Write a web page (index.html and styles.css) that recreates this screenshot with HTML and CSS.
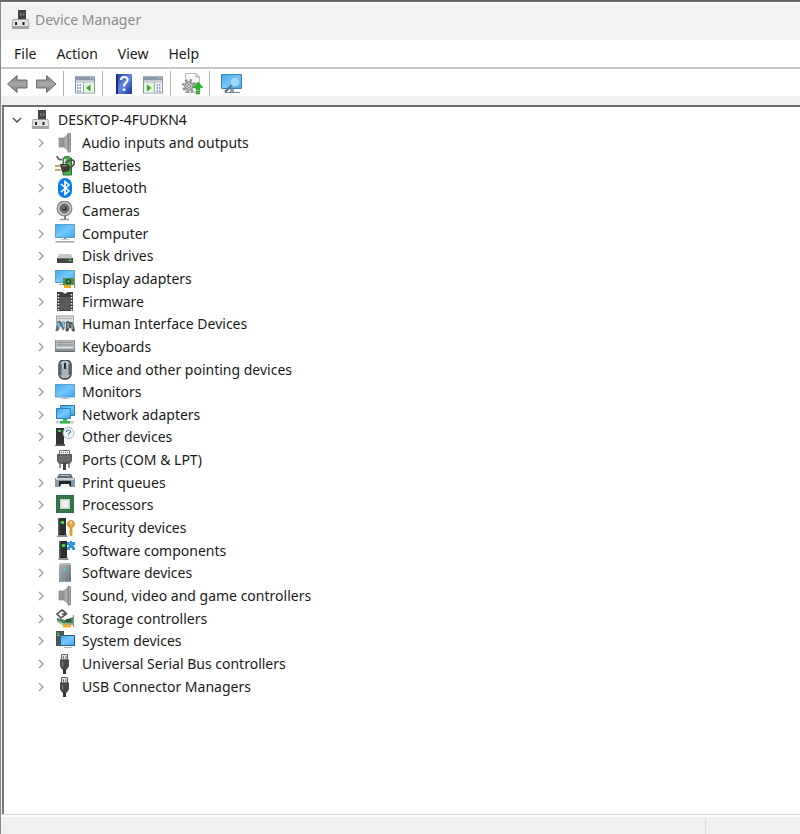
FILE: index.html
```
<!DOCTYPE html>
<html lang="en">
<head>
    <meta charset="UTF-8">
    <meta name="viewport" content="width=device-width, initial-scale=1.0">
    <title>Device Manager</title>
    <link rel="stylesheet" href="styles.css">
</head>
<body>
    <!-- shared gradients and repeated icons -->
    <svg class="defs" aria-hidden="true">
        <defs>
            <linearGradient id="blue" x1="0" y1="0" x2="1" y2="1">
                <stop offset="0" stop-color="#3ea6ec"/><stop offset=".5" stop-color="#74c8fc"/><stop offset="1" stop-color="#3ba5f3"/>
            </linearGradient>
            <linearGradient id="metal" x1="0" y1="0" x2="1" y2="0">
                <stop offset="0" stop-color="#8a8a8a"/><stop offset=".5" stop-color="#b4b4b4"/><stop offset="1" stop-color="#8c8c8c"/>
            </linearGradient>
            <linearGradient id="arrow" x1="0" y1="0" x2="0" y2="1">
                <stop offset="0" stop-color="#777"/><stop offset=".5" stop-color="#aaa"/><stop offset="1" stop-color="#777"/>
            </linearGradient>
            <linearGradient id="case" x1="0" y1="0" x2="1" y2="1">
                <stop offset="0" stop-color="#b0b8bd"/><stop offset="1" stop-color="#69747b"/>
            </linearGradient>
            <linearGradient id="help" x1="0" y1="0" x2="1" y2="1">
                <stop offset="0" stop-color="#1c3a9c"/><stop offset=".5" stop-color="#6486e0"/><stop offset="1" stop-color="#16339a"/>
            </linearGradient>
        </defs>
        <symbol id="chevron" viewBox="0 0 10 10"><path d="M3 1l4 4-4 4" fill="none" stroke="#a0a0a0" stroke-width="1.4"/></symbol>
        <symbol id="device" viewBox="0 0 20 20">
            <path d="M7 0h8v10H7z" fill="#444"/><path d="M9 3h1.500v3H9zM12 3h1.500v3H12z" fill="#777"/>
            <path d="M2 9.500h15l1 7H1z" fill="#e4e4e4" stroke="#999" stroke-width=".8"/>
            <path d="M1 16h17v3H1z" fill="#a5a5a5"/><path d="M4 12h2v3H4zM11.500 12h2v3h-2z" fill="#222"/>
        </symbol>
        <symbol id="speaker" viewBox="0 0 20 20">
            <path d="M4 5h4v9H4z" fill="#9b9b9b" stroke="#777" stroke-width=".6"/>
            <path d="M8 5l6-5v19l-6-5z" fill="url(#metal)"/><path d="M13 .500h2.500v18.500H13q1.500-9 0-18.500z" fill="#b0b0b0" stroke="#707070" stroke-width=".7"/>
        </symbol>
        <symbol id="usb" viewBox="0 0 20 20">
            <path d="M6.500.500h6V6h-6z" fill="#e5e5e5" stroke="#666"/><path d="M8 2.500h1v2H8zM10.500 2.500h1v2h-1z" fill="#444"/>
            <path d="M5 5.500h9V12l-2 3.500H7L5 12z" fill="#464646"/><path d="M8 15h3v5H8z" fill="#333"/><path d="M7.500 7.500v5" stroke="#7c7c7c" stroke-width="1.300"/>
        </symbol>
        <symbol id="tower" viewBox="0 0 20 20">
            <path d="M4 0h8v16H4z" fill="#2d2f31"/><path d="M4 0h1.500v16H4z" fill="#5a5e61"/><path d="M4 16h8l2 3H3z" fill="#8a8e91"/>
            <path d="M5 16.500h7" stroke="#222"/><circle cx="8.500" cy="4.500" r="1.800" fill="#39e04a"/>
        </symbol>
    </svg>

    <div class="window">
        <header class="titlebar">
            <svg class="icon" aria-hidden="true"><use href="#device"/></svg>
            <h1>Device Manager</h1>
        </header>

        <nav class="menubar">
            <button type="button">File</button>
            <button type="button">Action</button>
            <button type="button">View</button>
            <button type="button">Help</button>
        </nav>

        <div class="toolbar" role="toolbar" aria-label="Tools">
            <div class="group">
                <button type="button" aria-label="Back"><svg viewBox="0 0 22 22"><path d="M1.500 11L11 2.500V7h10v8H11v4.500z" fill="url(#arrow)" stroke="#6d6d6d"/></svg></button>
                <button type="button" aria-label="Forward"><svg viewBox="0 0 22 22"><path d="M21 11l-9.500-8.500V7H1.500v8h10v4.500z" fill="url(#arrow)" stroke="#6d6d6d"/></svg></button>
            </div>
            <div class="group">
                <button type="button" aria-label="Show/Hide Console Tree"><svg viewBox="0 0 22 22">
                    <path d="M1.500 4h19v16h-19z" fill="#fff" stroke="#8493a0"/><path d="M1 3.500h20v4H1z" fill="#8797a5"/><path d="M16 5h1M18.500 5h1" stroke="#fff"/>
                    <path d="M1 9h20M9.500 9v11" stroke="#9ba9b4"/><path d="M3 12h4M3 15h4M3 18h4" stroke="#5487bd" stroke-width="1.500" stroke-dasharray="1.500 1"/>
                    <path d="M10.500 10h9v9.500h-9z" fill="#e4f5df"/><path d="M16.500 11.500v7l-4.500-3.500z" fill="#32ad25"/></svg></button>
            </div>
            <div class="group">
                <button type="button" aria-label="Help"><svg viewBox="0 0 22 22">
                    <path d="M3 1h16v20H3z" fill="url(#help)"/><path d="M3 1h2v20H3z" fill="#173081"/>
                    <path d="M8 7q0-3 3.300-3T14.500 7q0 1.800-2 3.200-1.500 1-1.500 3.300" fill="none" stroke="#fff" stroke-width="2.200"/><path d="M9.800 15.500h2.500V18H9.800z" fill="#fff"/></svg></button>
                <button type="button" aria-label="Show/Hide Action Pane"><svg viewBox="0 0 22 22">
                    <path d="M1.500 4h19v16h-19z" fill="#fff" stroke="#8493a0"/><path d="M1 3.500h20v4H1z" fill="#8797a5"/><path d="M16 5h1M18.500 5h1" stroke="#fff"/>
                    <path d="M1 9h20M12.500 9v11" stroke="#9ba9b4"/><path d="M14.500 12h4M14.500 15h4M14.500 18h4" stroke="#5487bd" stroke-width="1.500" stroke-dasharray="1.500 1"/>
                    <path d="M2 10h10v9.500H2z" fill="#e4f5df"/><path d="M5 11.500v7l4.500-3.500z" fill="#32ad25"/></svg></button>
            </div>
            <div class="group">
                <button type="button" aria-label="Update device driver"><svg viewBox="0 0 22 22">
                    <path d="M4.500.500h11l3 3v16h-14z" fill="#f8f8f8" stroke="#bbb"/><path d="M15 .500V4h3.500" fill="#ddd" stroke="#aaa"/>
                    <circle cx="8" cy="13" r="5.800" fill="none" stroke="#8c8c8c" stroke-width="2.500" stroke-dasharray="2.300 2.255"/>
                    <circle cx="8" cy="13" r="3.800" fill="#ddd" stroke="#999" stroke-width="2"/><circle cx="8" cy="13" r="1.500" fill="#fff" stroke="#777"/>
                    <path d="M17 9l5 5.500h-3V17h-4v-2.500h-3zM15 18h4v1h-4zM15 20h4v1h-4z" fill="#28b829" stroke="#169519" stroke-width=".5"/></svg></button>
            </div>
            <div class="group">
                <button type="button" aria-label="Scan for hardware changes"><svg viewBox="0 0 22 22">
                    <path d="M1.500 1.500h20v14h-20z" fill="url(#blue)" stroke="#3c83b6"/><path d="M10 16h4v3h-4z" fill="#8ca4b4"/><path d="M5 19.500h15" stroke="#708391"/>
                    <circle cx="15" cy="9" r="5" fill="#a8e0ff" fill-opacity=".8" stroke="#7ea9c6"/><path d="M11.500 12.500L5 19" stroke="#536d80" stroke-width="2"/></svg></button>
            </div>
        </div>

        <main class="pane">
            <ul class="tree" role="tree" aria-label="Devices">
                <li class="root" role="treeitem" aria-expanded="true">
                    <button type="button" aria-label="Collapse"><svg viewBox="0 0 10 10"><path d="M1 3l4 4 4-4" fill="none" stroke="#444" stroke-width="1.300"/></svg></button>
                    <svg class="icon"><use href="#device"/></svg>
                    <span>DESKTOP-4FUDKN4</span>
                </li>
                <li role="treeitem"><button type="button" aria-label="Expand"><svg><use href="#chevron"/></svg></button>
                    <svg class="icon"><use href="#speaker"/></svg>
                    <span>Audio inputs and outputs</span></li>
                <li role="treeitem"><button type="button" aria-label="Expand"><svg><use href="#chevron"/></svg></button>
                    <svg class="icon" viewBox="0 0 20 20"><path d="M8 2h2V0h4v2h2.500v17H8z" fill="#3fb54a" stroke="#2c6e33"/><path d="M10 3v5" stroke="#d4f0d3" stroke-width="2"/><path d="M2 0q1 4.500 5 3.500M10 7q7-5 9-2t-4 7" fill="none" stroke="#555" stroke-width="1.800"/><path d="M0 10h6M0 14h6" stroke="#a58b4c" stroke-width="1.600"/><path d="M5 8h5q5 0 5 4t-5 4H7z" fill="#3c3c36"/><path d="M7 10h5" stroke="#9a9a92"/></svg>
                    <span>Batteries</span></li>
                <li role="treeitem"><button type="button" aria-label="Expand"><svg><use href="#chevron"/></svg></button>
                    <svg class="icon" viewBox="0 0 20 20"><rect x="3" y="0" width="14" height="20" rx="7" fill="#087ee8"/><path d="M6 6l8 7-4 3.500v-13L14 7l-8 7" fill="none" stroke="#fff" stroke-width="1.600"/></svg>
                    <span>Bluetooth</span></li>
                <li role="treeitem"><button type="button" aria-label="Expand"><svg><use href="#chevron"/></svg></button>
                    <svg class="icon" viewBox="0 0 20 20"><path d="M9 15h2v3H9z" fill="#777"/><path d="M5 18.500h9" stroke="#999" stroke-width="1.500"/><circle cx="9.500" cy="7.500" r="7.300" fill="#c4c4c4" stroke="#8c8c8c" stroke-width="1.400"/><circle cx="9.500" cy="7.500" r="4.300" fill="#73777a" stroke="#555"/><circle cx="9.500" cy="7.500" r="2.300" fill="#26292c"/><circle cx="9" cy="7" r="1" fill="#a7b6c1"/></svg>
                    <span>Cameras</span></li>
                <li role="treeitem"><button type="button" aria-label="Expand"><svg><use href="#chevron"/></svg></button>
                    <svg class="icon" viewBox="0 0 20 20"><path d="M.500.500h19v13H.500z" fill="url(#blue)" stroke="#4a91c0" stroke-width=".8"/><path d="M9 14h2v1.500H9z" fill="#82939d"/><path d="M6 15.500h8" stroke="#c4ccd1"/><path d="M1 17h18l1 1.500H0z" fill="#9aa4aa"/></svg>
                    <span>Computer</span></li>
                <li role="treeitem"><button type="button" aria-label="Expand"><svg><use href="#chevron"/></svg></button>
                    <svg class="icon" viewBox="0 0 20 20"><path d="M4 8h12l2 4H2z" fill="#c6c8c9"/><path d="M2 12h16v5H2z" fill="#424647"/><path d="M3 12.500h14" stroke="#777"/><path d="M13.500 14.500h3" stroke="#37db4b" stroke-width="1.500"/></svg>
                    <span>Disk drives</span></li>
                <li role="treeitem"><button type="button" aria-label="Expand"><svg><use href="#chevron"/></svg></button>
                    <svg class="icon" viewBox="0 0 20 20"><path d="M.500 1.500h19v12H.500z" fill="url(#blue)" stroke="#4a91c0" stroke-width=".8"/><path d="M4 15.500h5" stroke="#9aa"/><path d="M8 9h11v7H8z" fill="#4b9152"/><path d="M19.500 7v12" stroke="#888"/><circle cx="13.500" cy="12.500" r="2.800" fill="#244f31"/><path d="M12 12.500h3M13.500 11v3" stroke="#8eb18b" stroke-width=".7"/><path d="M9 16h7v3H9z" fill="#edaa27"/></svg>
                    <span>Display adapters</span></li>
                <li role="treeitem"><button type="button" aria-label="Expand"><svg><use href="#chevron"/></svg></button>
                    <svg class="icon" viewBox="0 0 20 20"><path d="M2 0h5.500q2.500 3 5 0H18v19H2z" fill="#3c3c3c"/><path d="M5 5h10v13H5z" fill="#5a5a5a"/><path d="M3.500 2v17M16.500 2v17" stroke="#eee" stroke-width="1.600" stroke-dasharray="1.500 1.500"/></svg>
                    <span>Firmware</span></li>
                <li role="treeitem"><button type="button" aria-label="Expand"><svg><use href="#chevron"/></svg></button>
                    <svg class="icon" viewBox="0 0 20 20"><path d="M1.500 2h17v7h-17z" fill="#dde0e2" stroke="#9aa0a4"/><path d="M3 4.500h14" stroke="#aab2b7"/><path d="M2 8q2.500-3 4 0h1q2.500-2 3 1l-.500 6q-2 3-3-2H5q-1 5-4.500 4z" fill="#616f78"/><path d="M3 9l2 5M8 8l1 5" stroke="#79cdf2" stroke-width="2"/><path d="M11 8q2-2 3.500 0H17q2 1 3 9-3 2-4-3h-1.500q-1 5-4 3z" fill="#4f5a61"/><path d="M13 9v5M17 10v5" stroke="#a9b7bf" stroke-width="1.200"/></svg>
                    <span>Human Interface Devices</span></li>
                <li role="treeitem"><button type="button" aria-label="Expand"><svg><use href="#chevron"/></svg></button>
                    <svg class="icon" viewBox="0 0 20 20"><path d="M0 3h20v12H0z" fill="#8a9196"/><path d="M1 3.500h18V12H1z" fill="#b9bec1"/><path d="M2 5.500h16M2 8h16" stroke="#858c91"/><path d="M2 10.500h3M6 10.500h8M15 10.500h3" stroke="#e6e8ea"/><path d="M0 14h20v1H0z" fill="#666d72"/></svg>
                    <span>Keyboards</span></li>
                <li role="treeitem"><button type="button" aria-label="Expand"><svg><use href="#chevron"/></svg></button>
                    <svg class="icon" viewBox="0 0 20 20"><rect x="4" y="0" width="12" height="19" rx="5" fill="#abb3ba" stroke="#3d4246" stroke-width="1.500"/><path d="M5.500 4v11M14.500 4v11" stroke="#59636b" stroke-width="2"/><path d="M8 1.500v6M12 1.500v6" fill="none" stroke="#dde2e6" stroke-width=".8"/><path d="M10 3v6" stroke="#252d34" stroke-width="2.200"/></svg>
                    <span>Mice and other pointing devices</span></li>
                <li role="treeitem"><button type="button" aria-label="Expand"><svg><use href="#chevron"/></svg></button>
                    <svg class="icon" viewBox="0 0 20 20"><path d="M.500 2.500h19v12.500H.500z" fill="url(#blue)" stroke="#4a91c0" stroke-width=".8"/><path d="M9 15.500h2v1H9z" fill="#798a94"/><path d="M6 16.500h8" stroke="#b4bdc3"/></svg>
                    <span>Monitors</span></li>
                <li role="treeitem"><button type="button" aria-label="Expand"><svg><use href="#chevron"/></svg></button>
                    <svg class="icon" viewBox="0 0 20 20"><path d="M5.500.500h14v10h-14z" fill="url(#blue)" stroke="#2c79ac"/><path d="M1.500 3.500h14v10h-14z" fill="url(#blue)" stroke="#2f80b5"/><path d="M1 16h18v2.500H1z" fill="#c9cdd0"/><path d="M8 14h4v2h3v2.500H5V16h3z" fill="#35ba4b"/></svg>
                    <span>Network adapters</span></li>
                <li role="treeitem"><button type="button" aria-label="Expand"><svg><use href="#chevron"/></svg></button>
                    <svg class="icon" viewBox="0 0 20 20"><path d="M1 1h8v16H1z" fill="#303234"/><path d="M1 17h9v2H0z" fill="#555"/><path d="M3 4h3" stroke="#39e04a" stroke-width="2"/><circle cx="13.500" cy="6" r="5.500" fill="#f8fbfd" stroke="#9fb1be"/><path d="M11.500 5q0-2 2-2t2 1.500q0 1-1.200 1.500-.8.500-.8 1.500M13.500 8.500v1" fill="none" stroke="#4a84b0" stroke-width="1.200"/></svg>
                    <span>Other devices</span></li>
                <li role="treeitem"><button type="button" aria-label="Expand"><svg><use href="#chevron"/></svg></button>
                    <svg class="icon" viewBox="0 0 20 20"><path d="M4.500.500h10V5h-10z" fill="#eee" stroke="#777"/><path d="M6 2.500h7" stroke="#666" stroke-dasharray="1 1"/><path d="M2 4h15v7l-2 3H4l-2-3z" fill="#5c6063"/><path d="M4 7h11M4 10h11" stroke="#7d8184"/><path d="M5 13v5M14 13v5" stroke="#777" stroke-width="1.500"/><path d="M8 13h3v7H8z" fill="#444"/></svg>
                    <span>Ports (COM &amp; LPT)</span></li>
                <li role="treeitem"><button type="button" aria-label="Expand"><svg><use href="#chevron"/></svg></button>
                    <svg class="icon" viewBox="0 0 20 20"><path d="M4 1h12l2 4H2z" fill="#5f6b73"/><path d="M5 2.500h10" stroke="#bbc4c9"/><path d="M0 5h20v9H0z" fill="#8d999f"/><path d="M1 6h18" stroke="#e1e6e8" stroke-width="1.500"/><path d="M4 8h12v5.500H4z" fill="#20272b"/><path d="M6 11h8l1 3H5z" fill="#f4f6f7"/><path d="M17 9h2" stroke="#3eb9c9" stroke-width="1.500"/></svg>
                    <span>Print queues</span></li>
                <li role="treeitem"><button type="button" aria-label="Expand"><svg><use href="#chevron"/></svg></button>
                    <svg class="icon" viewBox="0 0 20 20"><path d="M1 0h18v18H1z" fill="#2f6d43"/><path d="M3 2h14v14H3z" fill="none" stroke="#578f5f" stroke-dasharray="1 1"/><path d="M5 4h10v10H5z" fill="#cfd6d0"/><path d="M6.500 5.500h7v7h-7z" fill="#eef1ee"/></svg>
                    <span>Processors</span></li>
                <li role="treeitem"><button type="button" aria-label="Expand"><svg><use href="#chevron"/></svg></button>
                    <svg class="icon" viewBox="0 0 20 20"><use href="#tower" x="-1" width="20" height="20"/><circle cx="16" cy="6" r="3.500" fill="#e4a840" stroke="#c48925" stroke-width=".8"/><circle cx="16" cy="4.500" r="1" fill="#fff"/><path d="M14.500 9h3v8L16 18.500 14.500 17z" fill="#dca03a"/></svg>
                    <span>Security devices</span></li>
                <li role="treeitem"><button type="button" aria-label="Expand"><svg><use href="#chevron"/></svg></button>
                    <svg class="icon" viewBox="0 0 20 20"><use href="#tower" width="20" height="20"/><path d="M12 1h3q-.500-2 1-2t1 2h3v3q-1.500-.5-1.500 1t1.500 1v3h-3q.500-2-1-2t-1 2h-3V6q1.500.500 1.500-1T12 4z" fill="#3296e3"/></svg>
                    <span>Software components</span></li>
                <li role="treeitem"><button type="button" aria-label="Expand"><svg><use href="#chevron"/></svg></button>
                    <svg class="icon" viewBox="0 0 20 20"><path d="M5 0h10l1 2v16H4V2z" fill="url(#case)"/><path d="M5 1h10" stroke="#ccd3d7"/><path d="M10 5v3" stroke="#54d5e5" stroke-width="1.500"/><path d="M4 18.500h12" stroke="#929da4"/></svg>
                    <span>Software devices</span></li>
                <li role="treeitem"><button type="button" aria-label="Expand"><svg><use href="#chevron"/></svg></button>
                    <svg class="icon"><use href="#speaker"/></svg>
                    <span>Sound, video and game controllers</span></li>
                <li role="treeitem"><button type="button" aria-label="Expand"><svg><use href="#chevron"/></svg></button>
                    <svg class="icon" viewBox="0 0 20 20"><path d="M11 4L7 1 2 5l4 4 5-4H7" fill="none" stroke="#4c4c4c" stroke-width="1.600"/><path d="M2 9l8 2 8-3v8H8l-6-3z" fill="#438554"/><path d="M2 12l6 3h10" stroke="#c8d5c7" stroke-width="1.200" fill="none"/><path d="M11 10h5v3h-5z" fill="#285b38"/><path d="M18.500 6v12" stroke="#999" stroke-width="1.300"/><path d="M8 15.500h8v3H8z" fill="#eead31"/></svg>
                    <span>Storage controllers</span></li>
                <li role="treeitem"><button type="button" aria-label="Expand"><svg><use href="#chevron"/></svg></button>
                    <svg class="icon" viewBox="0 0 20 20"><path d="M1 0h8v15H1z" fill="#4c5357"/><path d="M2 4.500h5" stroke="#9da5a9"/><path d="M2 2.500h2" stroke="#3ade50" stroke-width="1.500"/><path d="M5.500 4.500h14v10h-14z" fill="url(#blue)" stroke="#2f5875"/><path d="M9 16.500h8" stroke="#aab5bc"/></svg>
                    <span>System devices</span></li>
                <li role="treeitem"><button type="button" aria-label="Expand"><svg><use href="#chevron"/></svg></button>
                    <svg class="icon"><use href="#usb"/></svg>
                    <span>Universal Serial Bus controllers</span></li>
                <li role="treeitem"><button type="button" aria-label="Expand"><svg><use href="#chevron"/></svg></button>
                    <svg class="icon"><use href="#usb"/></svg>
                    <span>USB Connector Managers</span></li>
            </ul>
        </main>

        <footer class="statusbar"><span></span><span></span></footer>
    </div>
</body>
</html>
```

FILE: styles.css
```
* {
    box-sizing: border-box;
}
body {
    margin: 0;
    font-family: "Noto Sans", "Open Sans", sans-serif;
    font-size: 14px;
    color: #1a1a1a;
    background-color: #f0f0f0;
}
button {
    padding: 0;
    border: 0;
    background: none;
    font: inherit;
    color: inherit;
}
svg {
    display: block;
}
.defs {
    position: absolute;
    width: 0;
    height: 0;
}
.icon {
    width: 20px;
    height: 20px;
    flex: none;
}
.window {
    display: flex;
    flex-direction: column;
    min-height: 100vh;
    border-top: 2px solid #666;
    border-left: 1px solid #8a8a8a;
}
.titlebar {
    display: flex;
    align-items: center;
    gap: 4px;
    height: 38px;
    padding: 0 0 4px 10px;
    border-top: 1px solid #fff;
    background-color: #f2f2f2;
}
.titlebar h1 {
    margin: 0;
    font-size: 14px;
    font-weight: normal;
    color: #8c8c8c;
}
.menubar {
    display: flex;
    align-items: center;
    gap: 20px;
    height: 29px;
    padding-left: 13px;
    border-bottom: 2px solid #c8c8c8;
    background-color: #fff;
}
.toolbar {
    display: flex;
    height: 27px;
    padding-top: 2px;
    background-color: #fff;
}
.group {
    display: flex;
    align-items: center;
    gap: 7px;
    padding: 0 6px 0 10px;
    border-right: 1px solid #b4b4b4;
}
.group:first-child {
    padding-left: 5px;
}
.group:last-child {
    border-right: 0;
}
.toolbar svg {
    width: 22px;
    height: 22px;
}
.pane {
    display: flex;
    flex: 1;
    margin: 9px 0 0 1px;
    padding: 2px 0 116px;
    border-top: 2px solid #6e6e6e;
    border-left: 2px solid #777;
    background-color: #fff;
}
/* rows share the height of the pane evenly */
.tree {
    display: grid;
    flex: 1;
    grid-auto-rows: minmax(20px, 1fr);
    margin: 0;
    padding: 0;
    list-style: none;
}
.tree li {
    display: flex;
    align-items: center;
    padding-left: 32px;
    line-height: 20px;
    white-space: nowrap;
}
.tree li button {
    margin-right: 9px;
}
.tree li button svg {
    width: 10px;
    height: 10px;
}
.tree .icon {
    margin-right: 7px;
}
.tree .root {
    padding-left: 8px;
}
.statusbar {
    display: flex;
    height: 20px;
    border-top: 1px solid #d8d8d8;
    box-shadow: inset 0 2px #fff;
}
.statusbar span {
    flex: 1;
    margin-top: 4px;
    border-right: 1px solid #d8d8d8;
}
.statusbar span:last-child {
    flex: 0 0 94px;
    border-right: 0;
}
```
